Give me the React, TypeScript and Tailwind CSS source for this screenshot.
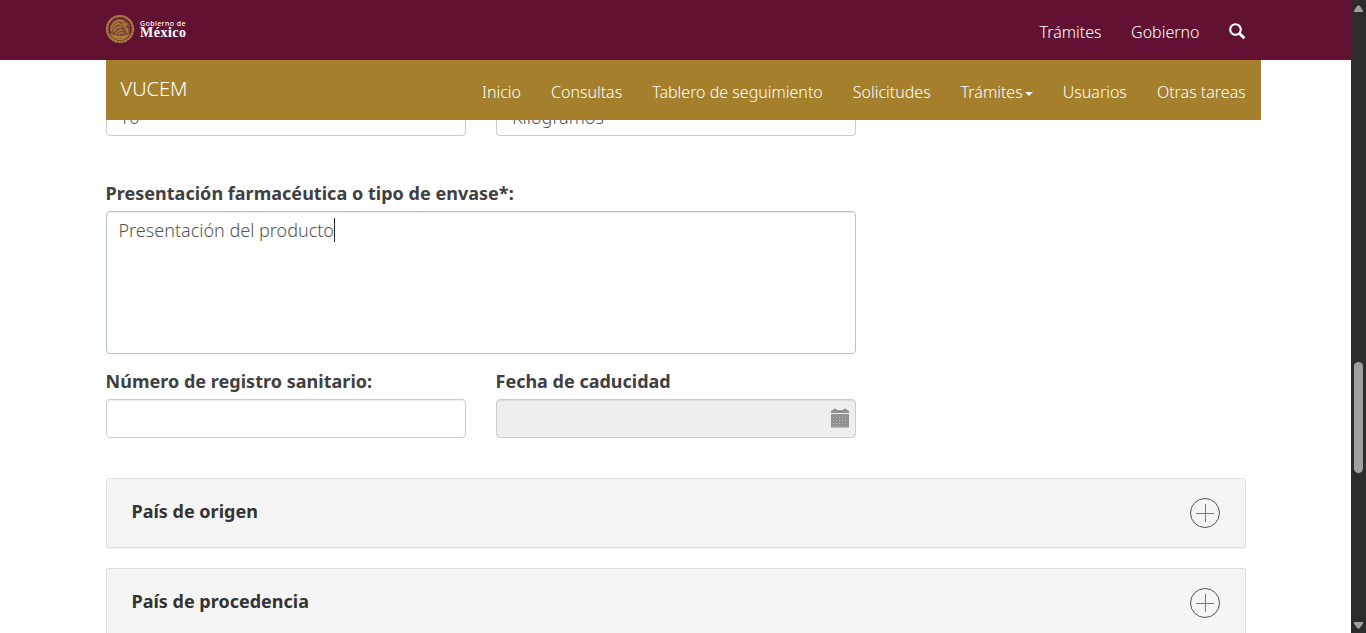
import React from 'react';

const navItems = ['Inicio', 'Consultas', 'Tablero de seguimiento', 'Solicitudes', 'Trámites', 'Usuarios', 'Otras tareas'];

function Emblem() {
  return (
    <svg width="30" height="30" viewBox="0 0 30 30" fill="none" stroke="#a77c3e">
      <circle cx="15" cy="15" r="10.500" fill="#94663b" stroke="none" opacity=".65" />
      <circle cx="15" cy="15" r="12.900" strokeWidth="2.500" strokeDasharray="3 .3" />
      <path d="M6.500 17c-1-5 2-9.500 7-10.500 3-.5 5 1 5.500 3l2 .5-2.500 1c2 2 4 4.500 4.500 8" strokeWidth="1.500" />
      <path d="M8 15c1-4 4-6 7.500-5M8.500 18c2-4 5-6 8-4.500M11 20c1.500-3 4-5 6.500-3.500M13.500 21c1-2 3-3 5-2M12 8.500l5 3M19 12l3-2M20 15l3 1" strokeWidth="1.400" />
      <path d="M6 20c3 4.500 6 5.500 9 5.500s6-1 9-5.500M9 21.500l3 1.500h6l3-1.500" strokeWidth="2" />
    </svg>
  );
}

function SearchIcon() {
  return (
    <svg width="17" height="17" viewBox="0 0 17 17" fill="none" stroke="#fff">
      <circle cx="6.500" cy="6.500" r="5.300" strokeWidth="2.100" />
      <path d="M10.500 10.500l4.900 4.700" strokeWidth="2.900" />
    </svg>
  );
}

function CalendarIcon() {
  const dots: React.ReactNode[] = [];
  for (let row = 0; row < 4; row++) {
    for (let col = 0; col < 5; col++) {
      dots.push(<rect key={`${row}-${col}`} x={2 + col * 3} y={9 + row * 3} width="1" height="1" fill="#bababa" />);
    }
  }
  return (
    <svg width="18" height="20" viewBox="0 0 18 20" fill="#919191">
      <path d="M0 5V3.500Q0 2 1.500 2H2Q2.500.5 4 .5T6 2h6q.5-1.500 2-1.500T16 2h.5Q18 2 18 3.500V5z" />
      <path d="M0 6h18v13q0 .5-.5.500H.5q-.5 0-.5-.500z" />
      {dots}
    </svg>
  );
}

function Panel({ title }: { title: string }) {
  return (
    <section className="flex h-[70px] shrink-0 justify-between rounded-[3px] border border-[#ddd] bg-[#f5f5f5] pr-[25px] pl-[24.500px] shadow-[0_1px_1px_rgba(0,0,0,0.05)]">
      <h2 className="pt-[19px] text-[18px] leading-[26px] font-bold text-[#333]">{title}</h2>
      <button className="mt-[19px] h-[30px] w-[30px]" aria-label={title}>
        <svg width="30" height="30" viewBox="0 0 30 30" fill="none" stroke="#545454">
          <circle cx="15" cy="15" r="14.500" />
          <path d="M6 15.500h18M15.500 6v18" stroke="#777" />
        </svg>
      </button>
    </section>
  );
}

function Scrollbar() {
  return (
    <div className="flex h-full w-[15px] shrink-0 flex-col items-center bg-[#2c2c2c] pt-[5px] pb-[4px]">
      <svg width="9" height="7" viewBox="0 0 9 7" fill="#9f9f9f"><path d="M3.500.500h2L9 5.500V7H0V5.500z" /></svg>
      <div className="mt-[350px] h-[111px] w-[9px] rounded-full bg-[#9f9f9f]" />
      <svg className="mt-auto" width="9" height="7" viewBox="0 0 9 7" fill="#9f9f9f"><path d="M0 0h9v1.500L5.500 6.500h-2L0 1.500z" /></svg>
    </div>
  );
}

export default function App() {
  return (
    <div className="flex h-[633px] w-[1366px] overflow-hidden bg-white font-['Noto_Sans',sans-serif]">
      <div className="flex min-w-0 flex-1 flex-col overflow-hidden">
        <header className="flex h-[60px] shrink-0 justify-between bg-[#611232] pr-[105px] pl-[105px]">
          <div className="flex items-start gap-[5px] pt-[14px] text-white">
            <Emblem />
            <div className="flex flex-col pt-[6px]">
              <span className="text-[7px] leading-[7px] font-medium tracking-[0.400px]">Gobierno de</span>
              <span className="font-['Liberation_Serif',serif] text-[14px] leading-[12px] font-bold tracking-[0.500px]">México</span>
            </div>
          </div>
          <nav className="flex gap-[30px] pt-5 text-[16px] leading-[24px] font-light text-white">
            <a className="-mr-[0.500px]">Trámites</a>
            <a className="-mr-[0.500px]">Gobierno</a>
            <a className="pt-[3px]"><SearchIcon /></a>
          </nav>
        </header>

        <div className="ml-[106px] flex h-[60px] w-[1155px] shrink-0 justify-between bg-[#a57f2c] pr-[15.250px] pl-[14.500px] text-white">
          <span className="pt-[15px] text-[20px] leading-[28px] font-light">VUCEM</span>
          <nav className="flex items-start gap-[30px] pt-5 text-[16px] leading-[24px] font-light">
            {navItems.map((item, i) => (
              <a key={item} className="flex items-center whitespace-nowrap">
                {item}
                {i === 4 && <span className="mt-[4px] ml-[2px] border-x-4 border-t-4 border-x-transparent border-t-white" />}
              </a>
            ))}
          </nav>
        </div>

        <main className="ml-[106px] flex w-[1140px] flex-1 flex-col overflow-hidden text-[18px]">
          <div className="flex h-4 shrink-0 items-end gap-[30px] overflow-hidden font-light text-[#555]">
            <div className="h-[38px] w-[360px] shrink-0 rounded-[4px] border border-[#ccc] pt-[5px] pl-[12px] leading-[26px]">10</div>
            <div className="h-[38px] w-[360px] shrink-0 rounded-[4px] border border-[#ccc] pt-[5px] pl-[15px] leading-[26px]">Kilogramos</div>
          </div>

          <label className="mt-[44px] -ml-[0.500px] leading-[26px] font-bold tracking-[0.025px] text-[#404041]">Presentación farmacéutica o tipo de envase*:</label>
          <div className="mt-[5px] flex h-[143px] w-[750px] shrink-0 items-start rounded-[4px] border border-[#b0c4d3] pt-[6px] pl-[11.500px] font-light text-[#555] shadow-[inset_0_1px_1px_rgba(0,0,0,0.075)]">
            <span className="leading-[24px]">Presentación del producto</span>
            <span className="h-6 w-px bg-[#222]" />
          </div>

          <div className="mt-[14px] flex shrink-0 gap-[30px]">
            <div className="flex w-[360px] flex-col">
              <label className="-ml-[0.500px] leading-[26px] font-bold tracking-[0.025px] text-[#404041]">Número de registro sanitario:</label>
              <div className="mt-[5px] h-[39px] rounded-[4px] border border-[#ccc] shadow-[inset_0_1px_1px_rgba(0,0,0,0.075)]" />
            </div>
            <div className="flex w-[360px] flex-col">
              <label className="-ml-[0.500px] leading-[26px] font-bold text-[#404041]">Fecha de caducidad</label>
              <div className="mt-[5px] flex h-[39px] justify-end rounded-[4px] border border-[#ccc] bg-[#eee] pt-[8px] pr-[6.500px] shadow-[inset_0_1px_1px_rgba(0,0,0,0.075)]">
                <CalendarIcon />
              </div>
            </div>
          </div>

          <div className="mt-10 flex shrink-0 flex-col gap-5">
            <Panel title="País de origen" />
            <Panel title="País de procedencia" />
          </div>
        </main>
      </div>
      <Scrollbar />
    </div>
  );
}
